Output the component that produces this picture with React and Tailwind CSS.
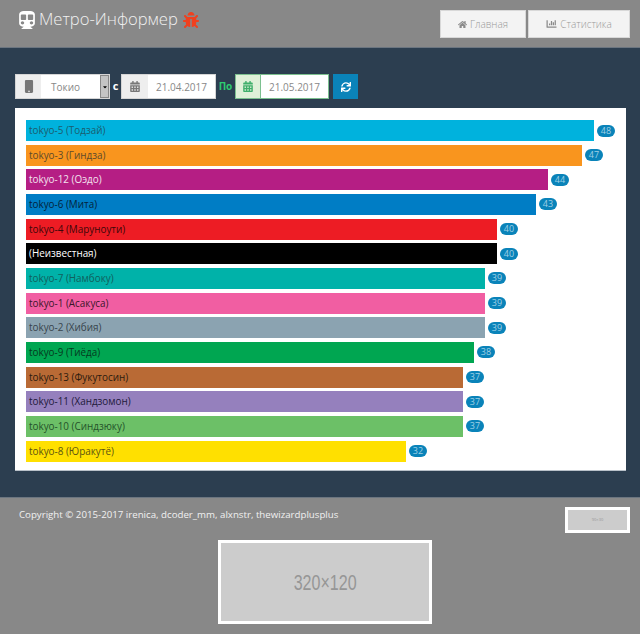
import React from 'react';
import { FaSubway, FaBug, FaHome, FaChartBar, FaCalendarAlt, FaSync, FaMobile, FaCaretDown } from 'react-icons/fa';

const lines = [
  { name: 'tokyo-5 (Тодзай)', value: 48, width: 568, color: 'bg-[#00b2dd]', text: 'text-[#1c5d6e]' },
  { name: 'tokyo-3 (Гиндза)', value: 47, width: 556, color: 'bg-[#f9951e]', text: 'text-[#5e4a2b]' },
  { name: 'tokyo-12 (Оэдо)', value: 44, width: 522, color: 'bg-[#b51e84]', text: 'text-[#f3e3ee]' },
  { name: 'tokyo-6 (Мита)', value: 43, width: 510, color: 'bg-[#007dc5]', text: 'text-[#04233a]' },
  { name: 'tokyo-4 (Маруноути)', value: 40, width: 471, color: 'bg-[#ed1c24]', text: 'text-[#3c0709]' },
  { name: '(Неизвестная)', value: 40, width: 471, color: 'bg-black', text: 'text-white' },
  { name: 'tokyo-7 (Намбоку)', value: 39, width: 459, color: 'bg-[#00b2a9]', text: 'text-[#11605c]' },
  { name: 'tokyo-1 (Асакуса)', value: 39, width: 459, color: 'bg-[#f15ea2]', text: 'text-[#3a1729]' },
  { name: 'tokyo-2 (Хибия)', value: 39, width: 459, color: 'bg-[#8ba3b1]', text: 'text-[#38444c]' },
  { name: 'tokyo-9 (Тиёда)', value: 38, width: 448, color: 'bg-[#00a651]', text: 'text-[#05391e]' },
  { name: 'tokyo-13 (Фукутосин)', value: 37, width: 437, color: 'bg-[#b96a35]', text: 'text-[#2c1a0e]' },
  { name: 'tokyo-11 (Хандзомон)', value: 37, width: 437, color: 'bg-[#9580bd]', text: 'text-[#21193a]' },
  { name: 'tokyo-10 (Синдзюку)', value: 37, width: 437, color: 'bg-[#6cc067]', text: 'text-[#24522a]' },
  { name: 'tokyo-8 (Юракутё)', value: 32, width: 380, color: 'bg-[#ffe000]', text: 'text-[#5d5410]' },
];

const App = () => {
  return (
    <div className="w-[640px] h-[634px] overflow-hidden flex flex-col bg-[#2c3e50] font-['Open_Sans',sans-serif]">
      <header className="h-[48px] shrink-0 bg-[#888888] border-b border-[#6b7580] flex items-start justify-between pl-[19px] pr-[10px]">
        <div className="flex items-center h-[39px] text-white">
          <FaSubway className="w-[16px] h-[18px] mr-[4px]" />
          <span className="text-[16.6px] font-light text-[#f1f1f1] leading-none">Метро-Информер</span>
          <FaBug className="w-[16px] h-[16px] ml-[5px] text-[#f0401e]" />
        </div>
        <nav className="flex gap-[2px] pt-[10px]">
          <a className="w-[86px] h-[28px] bg-[#f3f3f3] border border-[#d8d8d8] flex items-center justify-center gap-[3px] text-[10px] font-light text-[#999999]"><FaHome className="w-[9px] h-[9px] text-[#8a8a8a]" />Главная</a>
          <a className="w-[102px] h-[28px] bg-[#f3f3f3] border border-[#d8d8d8] flex items-center justify-center gap-[3px] text-[10px] font-light text-[#999999]"><FaChartBar className="w-[11px] h-[10px] text-[#8a8a8a]" />Статистика</a>
        </nav>
      </header>

      <main className="h-[449px] shrink-0 px-[15px] pt-[26px]">
        <div className="flex items-center h-[25px] text-[10px]">
          <div className="w-[95px] h-[25px] flex bg-white border border-[#d5d5d5]">
            <span className="w-[25px] bg-[#eeeeee] flex items-center justify-center text-[#777777]"><FaMobile className="w-[10px] h-[13px]" /></span>
            <span className="flex-1 pl-[10px] leading-[25px] text-[#888888]">Токио</span>
            <span className="w-[9px] bg-[#c4c4c4] border border-[#888888] flex items-center justify-center"><FaCaretDown className="w-[6px] h-[6px] text-black" /></span>
          </div>
          <span className="w-[11px] text-center text-[11px] text-white font-bold">с</span>
          <div className="w-[95px] h-[25px] flex bg-white border border-[#d5d5d5]">
            <span className="w-[26px] bg-[#eeeeee] flex items-center justify-center text-[#777777]"><FaCalendarAlt className="w-[10px] h-[11px]" /></span>
            <span className="flex-1 text-center leading-[24px] text-[#888888]">21.04.2017</span>
          </div>
          <span className="w-[19px] text-center text-[#2ecc71] font-bold">По</span>
          <div className="w-[94px] h-[25px] flex bg-white border border-[#7cc08f]">
            <span className="w-[25px] bg-[#dff0d8] border-r border-[#7cc08f] flex items-center justify-center text-[#3fae6a]"><FaCalendarAlt className="w-[10px] h-[11px]" /></span>
            <span className="flex-1 text-center leading-[24px] text-[#888888]">21.05.2017</span>
          </div>
          <button className="ml-[4px] w-[25px] h-[25px] bg-[#0a83b9] flex items-center justify-center text-white"><FaSync className="w-[10px] h-[10px]" /></button>
        </div>

        <section className="mt-[9px] w-[611px] h-[363px] bg-white pt-[12px] pl-[11px] flex flex-col gap-[3.67px] border-b border-[#b9c1c9]">
          {lines.map(line => (
            <div key={line.name} className="flex items-center h-[21px]">
              <div className={`h-full flex items-center pl-[3px] text-[9.9px] ${line.color} ${line.text}`} style={{ width: line.width }}>{line.name}</div>
              <span className="ml-[3px] h-[12px] w-[18px] rounded-full bg-[#0a83b9] text-[9px] leading-[12px] text-center text-[#9fd0e6]">{line.value}</span>
            </div>
          ))}
        </section>
      </main>

      <footer className="flex-1 bg-[#888888] border-t border-[#6b7580]">
        <div className="flex justify-between pl-[19px] pr-[10px] pt-[9px]">
          <p className="text-[9.7px] leading-[16px] text-[#f1f1f1]">Copyright © 2015-2017 irenica, dcoder_mm, alxnstr, thewizardplusplus</p>
          <div className="w-[65px] h-[26px] bg-[#cccccc] border-[3px] border-white flex items-center justify-center text-[4px] text-[#999999]">90×30</div>
        </div>
        <div className="mt-[7px] ml-[218px] w-[214px] h-[84px] bg-[#cccccc] border-[3px] border-white flex items-center justify-center">
          <span className="text-[22px] text-[#969696] font-['Liberation_Sans',sans-serif] scale-x-[0.73]">320×120</span>
        </div>
      </footer>
    </div>
  );
};

export default App;
